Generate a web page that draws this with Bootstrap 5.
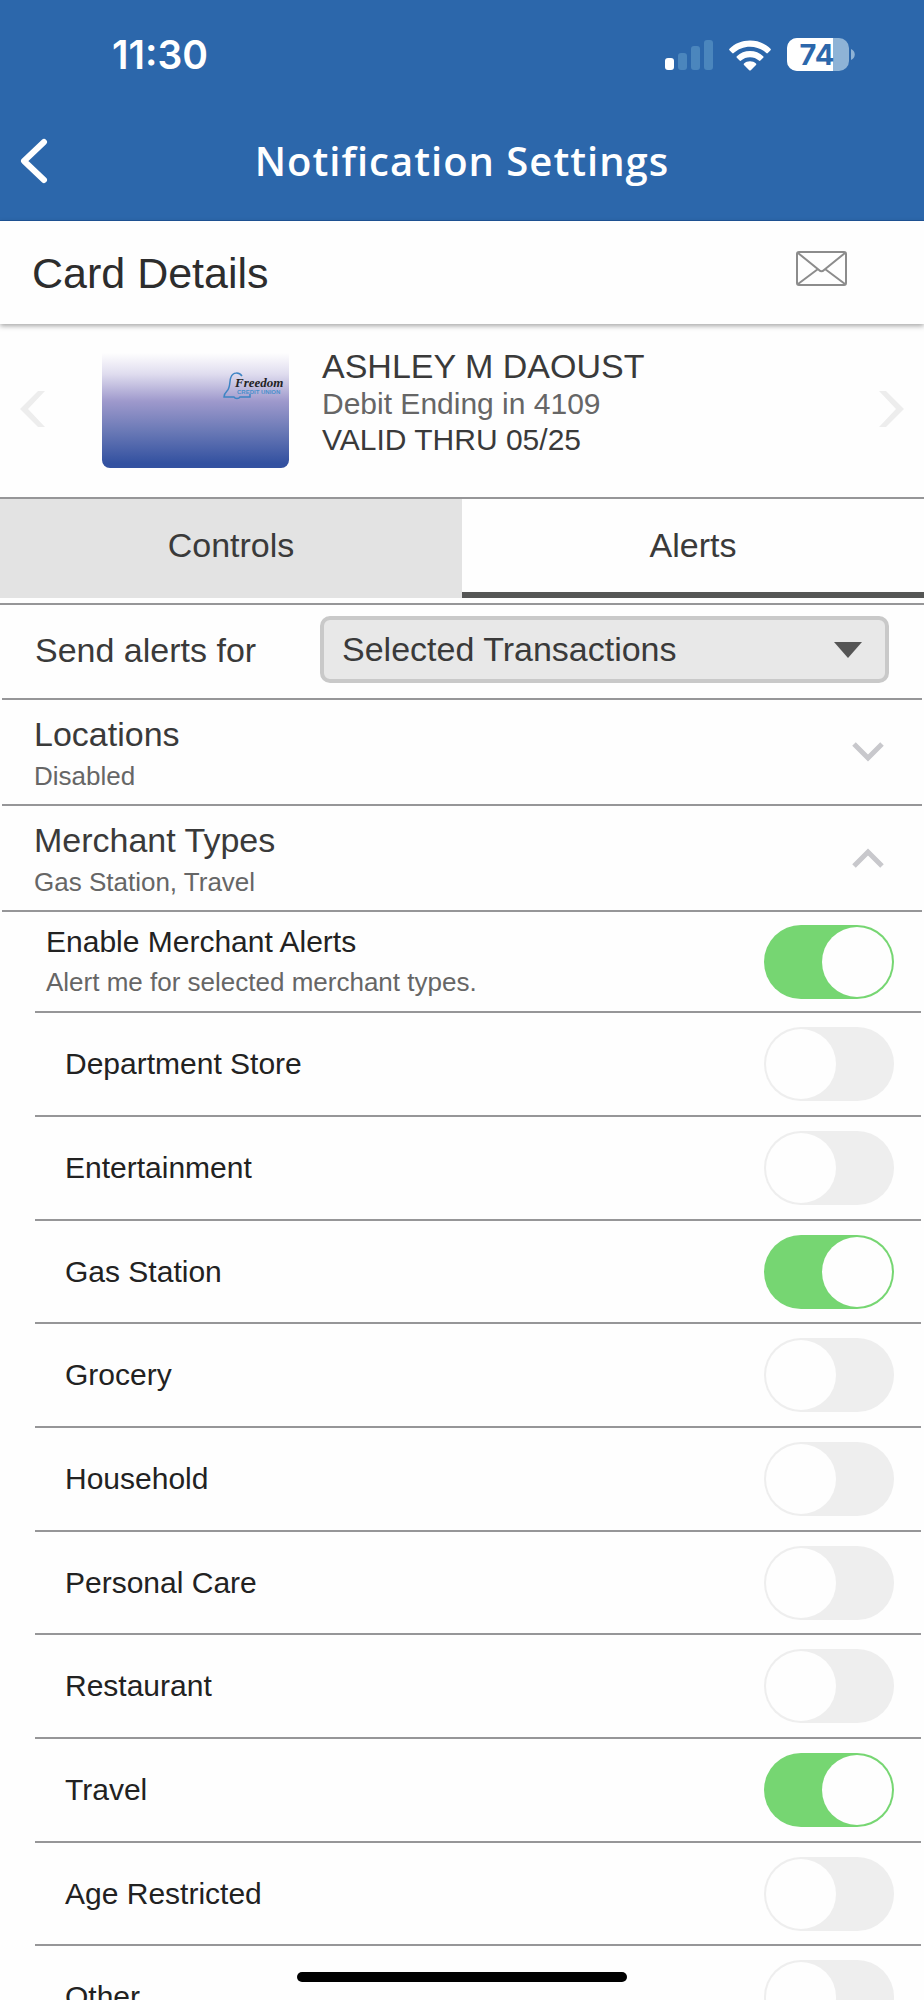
<!DOCTYPE html>
<html lang="en">
<head>
<meta charset="utf-8">
<meta name="viewport" content="width=device-width, initial-scale=1">
<title>Notification Settings</title>
<link href="https://cdn.jsdelivr.net/npm/bootstrap@5.3.0/dist/css/bootstrap.min.css" rel="stylesheet">
<script src="https://cdn.jsdelivr.net/npm/bootstrap@5.3.0/dist/js/bootstrap.bundle.min.js"></script>
<style>
  :root { --brand: #2c67ab; --rule: #969698; --ink: #3a3a3a; --muted: #666; --paper: #fefefe; }
  body { font-family: "Liberation Sans", Arial, sans-serif; background: var(--paper); color: var(--ink); font-size: 34px; line-height: 40px; }
  button { color: inherit; }
  svg { display: block; flex-shrink: 0; }

  .app-header { background: var(--brand); border-bottom: 1px solid #1f569b; color: #fff; }
  .status-bar { height: 102px; padding: 8px 69px 0 112px; font-family: Inter, sans-serif; }
  .clock { font-size: 39px; font-weight: 600; }
  .battery-text { font-size: 29px; font-weight: 700; }
  .title-bar { display: grid; grid-template-columns: 1fr auto 1fr; height: 118px; padding: 0 20px; }
  .title-bar h1 { font-family: "Open Sans", sans-serif; font-size: 40px; line-height: 56px; font-weight: 600; letter-spacing: 1px; }

  .details-bar { height: 103px; padding: 0 77px 8px 32px; box-shadow: 0 2px 5px rgba(0, 0, 0, .35); position: relative; }
  .details-bar h2 { font-size: 43px; line-height: 48px; color: #2d2d2d; padding-top: 9px; }

  .card-picker { height: 173px; padding: 0 20px; }
  .card-picker .btn { padding: 0 0 4px; }
  .card-face { width: 187px; height: 115px; margin-left: 57px; border-radius: 0 0 8px 8px; background: linear-gradient(#fefefe 0%, #e0ddef 18%, #9e99cc 42%, #6a79b6 68%, #3351a0 96%); }
  .card-info { padding: 22px 0 0 33px; }
  .text-md { font-size: 30px; line-height: 36px; }

  .tab-strip { border-top: 2px solid var(--rule); border-bottom: 2px solid var(--rule); padding-bottom: 5px; }
  .tab-strip .nav-link { height: 99px; border-radius: 0; color: var(--ink); padding: 0 0 2px; border-bottom: 6px solid transparent; }
  .tab-strip .nav-link:not(.active) { background: #e3e3e3; border-bottom-color: #e3e3e3; }
  .tab-strip .nav-link.active { background: var(--paper); color: var(--ink); border-bottom-color: #555655; }

  .ruled { border-bottom: 2px solid var(--rule); margin: 0 2px; }
  .send-row { height: 95px; padding: 0 33px 4px; }
  .send-row .form-select { height: 67px; width: 569px; padding: 0 60px 1px 18px; border: 4px solid #c9c9c9; border-radius: 10px; color: var(--ink); font-size: 34px; line-height: 58px;
    background: #e8e8e8 url("data:image/svg+xml,%3Csvg xmlns='http://www.w3.org/2000/svg' viewBox='0 0 28 16'%3E%3Cpath fill='%23555' d='M0 0h28L14 16z'/%3E%3C/svg%3E") no-repeat right 23px center / 28px 16px; }

  .group-toggle { height: 106px; width: calc(100% - 4px); padding: 0 37px 0 32px; background: none; border: 0; border-bottom: 2px solid var(--rule); }
  .group-text { padding-top: 4px; }
  .group-name { line-height: 44px; }
  .group-note { font-size: 26px; line-height: 40px; color: var(--muted); }

  .switch-row { height: 104px; margin: 0 3px 0 35px; padding: 0 27px 0 30px; border-bottom: 2px solid var(--rule); font-size: 30px; color: #222; }
  .switch-row:nth-child(3n+1) { height: 103px; }
  .switch-row.enable-row { height: 101px; padding-left: 11px; }
  .switch-row .form-check-input { width: 130px; height: 74px; margin: 0; float: none; border: 0; border-radius: 37px; background-color: #eee;
    background-image: url("data:image/svg+xml,%3Csvg xmlns='http://www.w3.org/2000/svg' viewBox='0 0 74 74'%3E%3Ccircle cx='37' cy='37' r='35' fill='%23fefefe'/%3E%3C/svg%3E"); }
  .switch-row .form-check-input:checked { background-color: #76d672; }

  main { scrollbar-width: none; }
  .home-bar { position: fixed; bottom: 18px; left: 50%; width: 330px; height: 10px; margin-left: -165px; border-radius: 5px; background: #000; }
</style>
</head>
<body>
<div class="vh-100 d-flex flex-column overflow-hidden">
  <header class="app-header flex-shrink-0">
    <div class="status-bar d-flex align-items-center justify-content-between">
      <span class="clock">11:30</span>
      <div class="d-flex align-items-center">
        <svg width="48" height="30" viewBox="0 0 48 30" aria-label="Signal">
          <rect x="0" y="18" width="9" height="12" rx="3" fill="#fff"/>
          <g fill="#4b86bd"><rect x="13" y="13" width="9" height="17" rx="3"/><rect x="26" y="6" width="9" height="24" rx="3"/><rect x="39" y="0" width="9" height="30" rx="3"/></g>
        </svg>
        <svg class="ms-3" width="42" height="31" viewBox="0 0 42 31" fill="#fff" aria-label="Wi-Fi">
          <path d="M21 0.500C29 .5 36.500 3.500 41.500 8.800c.5.500.5 1 0 1.500l-2.700 2.700c-.5.500-1 .5-1.500 0C33 9 27.200 6.700 21 6.700S9 9 4.700 13c-.5.500-1 .5-1.500 0L.5 10.300c-.5-.5-.5-1 0-1.500C5.500 3.500 13 .5 21 .5z"/>
          <path d="M21 11c5 0 9.700 1.900 13.200 5.200.5.500.5 1 0 1.500l-2.800 2.800c-.5.500-1 .5-1.500 0-2.400-2.100-5.500-3.300-8.900-3.300s-6.500 1.200-8.900 3.300c-.5.500-1 .5-1.500 0l-2.800-2.800c-.5-.5-.5-1 0-1.500C11.300 12.900 16 11 21 11z"/>
          <path d="M21 21.200c2.300 0 4.400.8 6 2.200.5.500.5 1 0 1.500l-5.200 5.300c-.5.500-1.100.5-1.600 0L15 24.900c-.5-.5-.5-1 0-1.500 1.600-1.400 3.700-2.200 6-2.200z"/>
        </svg>
        <svg class="ms-3" width="68" height="34" viewBox="0 0 68 34" aria-label="Battery 74%">
          <defs><clipPath id="cell"><rect x="0" y="0" width="62" height="33" rx="10"/></clipPath></defs>
          <g clip-path="url(#cell)"><rect width="62" height="33" fill="#8eb3d6"/><rect width="46" height="33" fill="#fff"/></g>
          <path d="M64 11c5 2 5 9 0 11z" fill="#8eb3d6"/>
          <text class="battery-text" x="30" y="27" text-anchor="middle" fill="#2c67ab">74</text>
        </svg>
      </div>
    </div>
    <div class="title-bar align-items-center">
      <button type="button" class="btn border-0 p-0 text-start text-white" aria-label="Back">
        <svg width="28" height="46" viewBox="0 0 28 46" fill="none" stroke="currentColor" stroke-width="6" stroke-linecap="round" stroke-linejoin="round"><path d="M24 4 4 23l20 19"/></svg>
      </button>
      <h1 class="m-0">Notification Settings</h1>
    </div>
  </header>

  <section class="details-bar d-flex align-items-center justify-content-between flex-shrink-0">
    <h2 class="m-0 fw-normal">Card Details</h2>
    <button type="button" class="btn border-0 p-0" aria-label="Messages">
      <svg width="51" height="35" viewBox="0 0 51 35" fill="none" stroke="#8c8c8c" stroke-width="2"><rect x="1" y="1" width="49" height="33" rx="2"/><path d="m2 2 21 17q2.500 2.500 5 0L49 2M2 33l20-15M49 33 29 18"/></svg>
    </button>
  </section>

  <main class="flex-grow-1 overflow-auto">
    <section class="card-picker d-flex align-items-center">
      <button type="button" class="btn border-0" aria-label="Previous card">
        <svg width="25" height="36" viewBox="0 0 25 36" fill="#ededed"><path d="M18 0h7L8 18l17 18h-7L0 18z"/></svg>
      </button>
      <div class="card-face flex-shrink-0 d-flex justify-content-end align-items-start pt-3 pe-1">
        <svg width="62" height="34" viewBox="0 0 62 34" aria-label="Freedom Credit Union">
          <path d="M19 7C16 3 10 3 8 8c-2 4 0 10-4 14-2 2-3 3-3 6h10c1 2 5 2 6 0h10v-3" fill="none" stroke="#3d84c4" stroke-width="1.500"/>
          <text x="12" y="18" font-family="Liberation Serif, serif" font-size="13" font-weight="700" font-style="italic" fill="#222">Freedom</text>
          <text x="14" y="25" font-family="Liberation Sans, sans-serif" font-size="6" font-weight="700" fill="#4a8fcc">CREDIT UNION</text>
        </svg>
      </div>
      <div class="card-info align-self-start flex-grow-1">
        <div>ASHLEY M DAOUST</div>
        <div class="text-md" style="color: var(--muted)">Debit Ending in 4109</div>
        <div class="text-md">VALID THRU 05/25</div>
      </div>
      <button type="button" class="btn border-0" aria-label="Next card">
        <svg width="25" height="36" viewBox="0 0 25 36" fill="#ededed"><path d="M7 0H0l17 18L0 36h7l18-18z"/></svg>
      </button>
    </section>

    <nav class="tab-strip nav nav-pills nav-fill">
      <button type="button" class="nav-link col-6">Controls</button>
      <button type="button" class="nav-link col-6 active" aria-current="page">Alerts</button>
    </nav>

    <div class="send-row ruled d-flex align-items-center justify-content-between">
      <label for="scope">Send alerts for</label>
      <select id="scope" class="form-select">
        <option>Selected Transactions</option>
      </select>
    </div>

    <button type="button" class="group-toggle d-flex align-items-center justify-content-between text-start mx-auto" aria-expanded="false">
      <span class="group-text">
        <span class="group-name d-block">Locations</span>
        <span class="group-note d-block">Disabled</span>
      </span>
      <svg width="34" height="22" viewBox="0 0 34 22" fill="none" stroke="#c8c8cc" stroke-width="5"><path d="m3 3 14 14L31 3"/></svg>
    </button>
    <button type="button" class="group-toggle d-flex align-items-center justify-content-between text-start mx-auto" data-bs-toggle="collapse" data-bs-target="#merchants" aria-expanded="true" aria-controls="merchants">
      <span class="group-text">
        <span class="group-name d-block">Merchant Types</span>
        <span class="group-note d-block">Gas Station, Travel</span>
      </span>
      <svg width="34" height="22" viewBox="0 0 34 22" fill="none" stroke="#c8c8cc" stroke-width="5"><path d="m3 19 14-14 14 14"/></svg>
    </button>

    <div id="merchants" class="collapse show">
      <div class="switch-row enable-row form-switch d-flex align-items-center justify-content-between">
        <label for="m-all"><span class="d-block">Enable Merchant Alerts</span><span class="group-note d-block">Alert me for selected merchant types.</span></label>
        <input class="form-check-input" type="checkbox" role="switch" id="m-all" checked>
      </div>
      <div class="switch-row form-switch d-flex align-items-center justify-content-between">
        <label for="m-dept">Department Store</label>
        <input class="form-check-input" type="checkbox" role="switch" id="m-dept">
      </div>
      <div class="switch-row form-switch d-flex align-items-center justify-content-between">
        <label for="m-ent">Entertainment</label>
        <input class="form-check-input" type="checkbox" role="switch" id="m-ent">
      </div>
      <div class="switch-row form-switch d-flex align-items-center justify-content-between">
        <label for="m-gas">Gas Station</label>
        <input class="form-check-input" type="checkbox" role="switch" id="m-gas" checked>
      </div>
      <div class="switch-row form-switch d-flex align-items-center justify-content-between">
        <label for="m-groc">Grocery</label>
        <input class="form-check-input" type="checkbox" role="switch" id="m-groc">
      </div>
      <div class="switch-row form-switch d-flex align-items-center justify-content-between">
        <label for="m-house">Household</label>
        <input class="form-check-input" type="checkbox" role="switch" id="m-house">
      </div>
      <div class="switch-row form-switch d-flex align-items-center justify-content-between">
        <label for="m-care">Personal Care</label>
        <input class="form-check-input" type="checkbox" role="switch" id="m-care">
      </div>
      <div class="switch-row form-switch d-flex align-items-center justify-content-between">
        <label for="m-rest">Restaurant</label>
        <input class="form-check-input" type="checkbox" role="switch" id="m-rest">
      </div>
      <div class="switch-row form-switch d-flex align-items-center justify-content-between">
        <label for="m-trav">Travel</label>
        <input class="form-check-input" type="checkbox" role="switch" id="m-trav" checked>
      </div>
      <div class="switch-row form-switch d-flex align-items-center justify-content-between">
        <label for="m-age">Age Restricted</label>
        <input class="form-check-input" type="checkbox" role="switch" id="m-age">
      </div>
      <div class="switch-row form-switch d-flex align-items-center justify-content-between">
        <label for="m-other">Other</label>
        <input class="form-check-input" type="checkbox" role="switch" id="m-other">
      </div>
    </div>
  </main>
</div>
<div class="home-bar"></div>
</body>
</html>
